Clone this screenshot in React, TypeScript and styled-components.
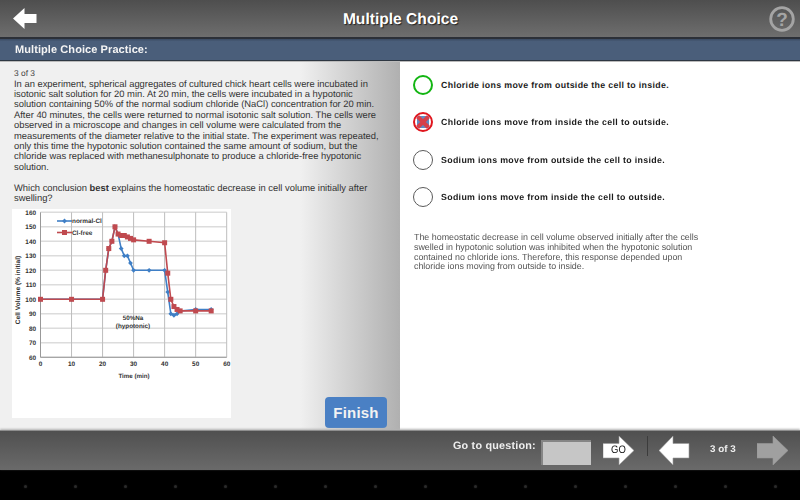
import * as React from 'react'
import styled, { createGlobalStyle } from 'styled-components'

const Global = createGlobalStyle`
  html, body { margin: 0; padding: 0; background: #000; }
  body { font-family: "Liberation Sans", Arial, sans-serif; text-rendering: geometricPrecision; }
`

// the reference is a soft, upscaled capture
const Page = styled.div`
  width: 800px;
  height: 500px;
  display: flex;
  flex-direction: column;
  overflow: hidden;
  filter: blur(0.3px);
`

const Header = styled.header`
  height: 37px;
  flex: none;
  display: flex;
  align-items: center;
  justify-content: space-between;
  padding: 0 5px 0 13px;
  background: linear-gradient(#4e4e4e, #6e6e6e);
  border-bottom: 2px solid #2c3038;
`

const Title = styled.h1`
  margin: 2px 0 0 -6px;
  font-size: 15.6px;
  font-weight: bold;
  color: #fff;
  text-shadow: 1px 1px 1px #222;
`

const SubBar = styled.div`
  height: 21px;
  flex: none;
  display: flex;
  align-items: center;
  padding-left: 15px;
  background: linear-gradient(#3a4a62, #4a5e7a 12%, #4a5e7a);
  border-bottom: 1px solid #2e3742;
  box-shadow: 0 1px 0 #bbb;
  font-size: 11px;
  font-weight: bold;
  letter-spacing: 0.08px;
  color: #f4f4f4;
  position: relative;
`

const Body = styled.main`
  height: 369px;
  flex: none;
  display: flex;
`

const LeftPane = styled.section`
  width: 400px;
  box-sizing: border-box;
  padding: 7px 13px 2px 13px;
  display: flex;
  flex-direction: column;
  background: linear-gradient(90deg, #f0f0f0 0, #f0f0f0 75%, #b0b0b0 100%);
`

const Counter = styled.div`
  font-size: 8.4px;
  line-height: 10.6px;
  color: #444;
  margin-left: 1px;
`

const Question = styled.p`
  margin: 0 0 0 1px;
  font-size: 9.4px;
  line-height: 10.4px;
  color: #333;
  white-space: nowrap;

  & + & {
    margin-top: 10.4px;
  }
`

const ChartRow = styled.div`
  margin-top: auto;
  display: flex;
  justify-content: space-between;
  align-items: flex-end;
`

const ChartCard = styled.div`
  width: 219px;
  height: 209px;
  margin: 0 0 10px -1px;
  background: #fff;
`

const FinishButton = styled.button`
  width: 62px;
  height: 31px;
  border: 0;
  border-radius: 4px;
  background: #4a80c4;
  color: #f2f2f2;
  font-family: inherit;
  font-size: 15px;
  font-weight: bold;
  letter-spacing: 0.2px;
  padding: 0;
`

const RightPane = styled.section`
  flex: 1;
  background: #fff;
  padding: 5.2px 0 0 13px;
`

const Choice = styled.div`
  height: 37.5px;
  display: flex;
  align-items: center;
  gap: 8px;
  font-size: 8.8px;
  font-weight: bold;
  letter-spacing: 0.33px;
  color: #1c1c1c;
`

const Ring = styled.span<{ $color: string; $width: number }>`
  width: 20px;
  height: 20px;
  flex: none;
  display: flex;
  align-items: center;
  justify-content: center;
  border-radius: 50%;
  border: ${p => p.$width}px solid ${p => p.$color};
  box-sizing: border-box;
  overflow: hidden;
`

const Explanation = styled.p`
  margin: 16.8px 0 0 1px;
  font-size: 8.9px;
  line-height: 9.8px;
  color: #555;
  white-space: nowrap;
`

const Footer = styled.footer`
  height: 39px;
  flex: none;
  position: relative;
  display: flex;
  align-items: flex-start;
  background: linear-gradient(#505050, #6a6a6a);
  border-top: 1px solid #8e8e8e;
  box-shadow: 0 -1px 2px #b4b4b4;
  padding-left: 453px;
`

const GoLabel = styled.span`
  margin-top: 9px;
  width: 82px;
  flex: none;
  font-size: 10.8px;
  font-weight: bold;
  letter-spacing: 0.2px;
  color: #eee;
  white-space: nowrap;
`

const GoInput = styled.div`
  width: 50px;
  height: 25px;
  margin: 9px 0 0 6px;
  flex: none;
  box-sizing: border-box;
  background: #c6c6c6;
  border-left: 2px solid #858585;
  border-top: 2px solid #858585;
`

const ArrowSlot = styled.div<{ $left: number }>`
  position: relative;
  margin: 5px 0 0 ${p => p.$left}px;
  width: 31px;
  height: 30px;
  flex: none;
  display: flex;
  align-items: center;
  justify-content: center;
`

const ArrowIcon = styled.svg`
  display: block;
`

const GoText = styled.span`
  position: absolute;
  left: 8px;
  top: 9px;
  font-size: 9.5px;
  line-height: 12px;
  color: #111;
  transform: scaleY(1.15);
`

const Divider = styled.div`
  width: 1px;
  height: 20px;
  margin: 5px 0 0 13px;
  background: #3c3c3c;
  flex: none;
`

const PageCount = styled.span`
  margin: 13px 0 0 20px;
  width: 47px;
  font-size: 9.8px;
  font-weight: bold;
  color: #eee;
  flex: none;
`

const NavBar = styled.div`
  height: 30px;
  flex: none;
  background: #000;
  display: flex;
  align-items: center;
  padding-top: 2px;
  box-sizing: border-box;
`

const NavDot = styled.span`
  width: 3px;
  height: 3px;
  border-radius: 50%;
  background: #2a2a2a;
  box-shadow: 0 0 2px #222;
`

const NavDots = styled.div`
  width: 100%;
  display: grid;
  grid-template-columns: repeat(16, 50px);
  justify-items: center;
`

const BackArrow = () => (
  <svg width="25" height="21" viewBox="0 0 25 21">
    <path d="M0 10.5 L11.5 0 V6 H23.5 V15 H11.5 V21 Z" fill="#fff" />
  </svg>
)

const HelpIcon = () => (
  <svg width="26" height="26" viewBox="0 0 26 26">
    <circle cx="13" cy="13" r="11.3" fill="none" stroke="#a4a4a4" strokeWidth="2.8" />
    <text x="13" y="19.5" textAnchor="middle" fontFamily="Liberation Sans" fontWeight="bold" fontSize="19" fill="#a4a4a4">?</text>
  </svg>
)

const WrongMark = () => (
  <svg width="16" height="16" viewBox="0 0 16 16">
    <rect x="2" y="2" width="12" height="12" fill="#5f8ac4" />
    <path d="M2.5 2.5 L13.5 13.5 M13.5 2.5 L2.5 13.5" stroke="#d6404a" strokeWidth="4" />
  </svg>
)

const NavArrow = ({ dir, fill }: { dir: 'left' | 'right'; fill: string }) => (
  <ArrowIcon width="31" height="30" viewBox="0 0 31 30">
    {dir === 'right'
      ? <path d="M0 7.5 H16 V0 L31 14.5 L16 29 V22 H0 Z" fill={fill} stroke="#999" strokeWidth="0.6" />
      : <path d="M30 7.5 H14 V0 L0 14.5 L14 29 V22 H30 Z" fill={fill} stroke="#999" strokeWidth="0.6" />}
  </ArrowIcon>
)

const normalCl: [number, number][] = [[0, 100], [10, 100], [20, 100], [21, 120], [22, 135], [23, 140], [24, 150], [25, 145], [26, 135], [27, 130], [28, 130], [29, 125], [30, 120], [35, 120], [40, 120], [41, 105], [42, 90], [43, 89], [44, 90], [45, 92], [50, 93], [55, 93]]
const clFree: [number, number][] = [[0, 100], [10, 100], [20, 100], [21, 120], [22, 135], [23, 140], [24, 150], [25, 145], [26, 144], [27, 144], [28, 143], [29, 142], [30, 141], [35, 140], [40, 139], [41, 118], [42, 100], [43, 95], [44, 93], [45, 92], [50, 92], [55, 92]]

const px = (t: number) => 28.5 + (t / 60) * 186.2
const py = (v: number) => 3.3 + ((160 - v) / 100) * 145
const points = (d: [number, number][]) => d.map(([t, v]) => `${px(t)},${py(v)}`).join(' ')

const BLUE = '#3f7fc6'
const RED = '#c04a4f'

const Chart = () => (
  <svg width="219" height="209" viewBox="0 0 219 209" fontFamily="Liberation Sans" fontSize="6.4" fontWeight="bold" fill="#333">
    {[60, 70, 80, 90, 100, 110, 120, 130, 140, 150, 160].map(v => (
      <g key={v}>
        <line x1={28.5} x2={214.7} y1={py(v)} y2={py(v)} stroke="#dcdcdc" strokeWidth="1.6" />
        <text x={24} y={py(v) + 2.2} textAnchor="end">{v}</text>
      </g>
    ))}
    {[0, 10, 20, 30, 40, 50, 60].map(t => (
      <g key={t}>
        <line x1={px(t)} x2={px(t)} y1={3.3} y2={148.3} stroke={t === 0 ? '#999' : '#bdbdbd'} strokeWidth="1" />
        <text x={px(t)} y={157} textAnchor="middle">{t}</text>
      </g>
    ))}
    <line x1={28.5} x2={214.7} y1={148.3} y2={148.3} stroke="#999" />
    <polyline points={points(normalCl)} fill="none" stroke={BLUE} strokeWidth="1.6" />
    {normalCl.map(([t, v]) => (
      <path key={t} d={`M${px(t)} ${py(v) - 2.4} l2.4 2.4 l-2.4 2.4 l-2.4 -2.4 Z`} fill={BLUE} />
    ))}
    <polyline points={points(clFree)} fill="none" stroke={RED} strokeWidth="1.6" />
    {clFree.map(([t, v]) => (
      <rect key={t} x={px(t) - 2.5} y={py(v) - 2.5} width="5" height="5" fill={RED} />
    ))}
    <line x1={45} x2={60} y1={12} y2={12} stroke={BLUE} strokeWidth="1.6" />
    <path d="M52.5 9.6 l2.4 2.4 l-2.4 2.4 l-2.4 -2.4 Z" fill={BLUE} />
    <text x={60} y={14.2}>normal-Cl</text>
    <line x1={45} x2={60} y1={23.5} y2={23.5} stroke={RED} strokeWidth="1.6" />
    <rect x={50} y={21} width="5" height="5" fill={RED} />
    <text x={60} y={25.8}>Cl-free</text>
    <text x={121} y={111} textAnchor="middle" fontSize="6.3">50%Na</text>
    <text x={121} y={118.5} textAnchor="middle" fontSize="6.3">(hypotonic)</text>
    <text x={122} y={168.5} textAnchor="middle" fontSize="6.2">Time (min)</text>
    <text transform="translate(8 81) rotate(-90)" textAnchor="middle" fontSize="6.6">Cell Volume (% initial)</text>
  </svg>
)

const choices = [
  { label: 'Chloride ions move from outside the cell to inside.', color: '#12b512', width: 2 },
  { label: 'Chloride ions move from inside the cell to outside.', color: '#e0161e', width: 2, wrong: true },
  { label: 'Sodium ions move from outside the cell to inside.', color: '#5a5a5a', width: 1.5 },
  { label: 'Sodium ions move from inside the cell to outside.', color: '#5a5a5a', width: 1.5 },
]

const questionLines = [
  'In an experiment, spherical aggregates of cultured chick heart cells were incubated in',
  'isotonic salt solution for 20 min. At 20 min, the cells were incubated in a hypotonic',
  'solution containing 50% of the normal sodium chloride (NaCl) concentration for 20 min.',
  'After 40 minutes, the cells were returned to normal isotonic salt solution. The cells were',
  'observed in a microscope and changes in cell volume were calculated from the',
  'measurements of the diameter relative to the initial state. The experiment was repeated,',
  'only this time the hypotonic solution contained the same amount of sodium, but the',
  'chloride was replaced with methanesulphonate to produce a chloride-free hypotonic',
  'solution.',
]

const explanationLines = [
  'The homeostatic decrease in cell volume observed initially after the cells',
  'swelled in hypotonic solution was inhibited when the hypotonic solution',
  'contained no chloride ions. Therefore, this response depended upon',
  'chloride ions moving from outside to inside.',
]

const App: React.FC = () => (
  <Page>
    <Global />
    <Header>
      <BackArrow />
      <Title>Multiple Choice</Title>
      <HelpIcon />
    </Header>
    <SubBar>Multiple Choice Practice:</SubBar>
    <Body>
      <LeftPane>
        <Counter>3 of 3</Counter>
        <Question>
          {questionLines.map(l => <React.Fragment key={l}>{l}<br /></React.Fragment>)}
        </Question>
        <Question>
          Which conclusion <b>best</b> explains the homeostatic decrease in cell volume initially after<br />
          swelling?
        </Question>
        <ChartRow>
          <ChartCard><Chart /></ChartCard>
          <FinishButton>Finish</FinishButton>
        </ChartRow>
      </LeftPane>
      <RightPane>
        {choices.map(c => (
          <Choice key={c.label}>
            <Ring $color={c.color} $width={c.width}>{c.wrong && <WrongMark />}</Ring>
            {c.label}
          </Choice>
        ))}
        <Explanation>
          {explanationLines.map(l => <React.Fragment key={l}>{l}<br /></React.Fragment>)}
        </Explanation>
      </RightPane>
    </Body>
    <Footer>
      <GoLabel>Go to question:</GoLabel>
      <GoInput />
      <ArrowSlot $left={12}>
        <NavArrow dir="right" fill="#fff" />
        <GoText>GO</GoText>
      </ArrowSlot>
      <Divider />
      <ArrowSlot $left={11}><NavArrow dir="left" fill="#fff" /></ArrowSlot>
      <PageCount>3 of 3</PageCount>
      <ArrowSlot $left={0}><NavArrow dir="right" fill="#a0a0a0" /></ArrowSlot>
    </Footer>
    <NavBar>
      <NavDots>
        {Array.from({ length: 16 }, (_, i) => <NavDot key={i} />)}
      </NavDots>
    </NavBar>
  </Page>
)

export default App
